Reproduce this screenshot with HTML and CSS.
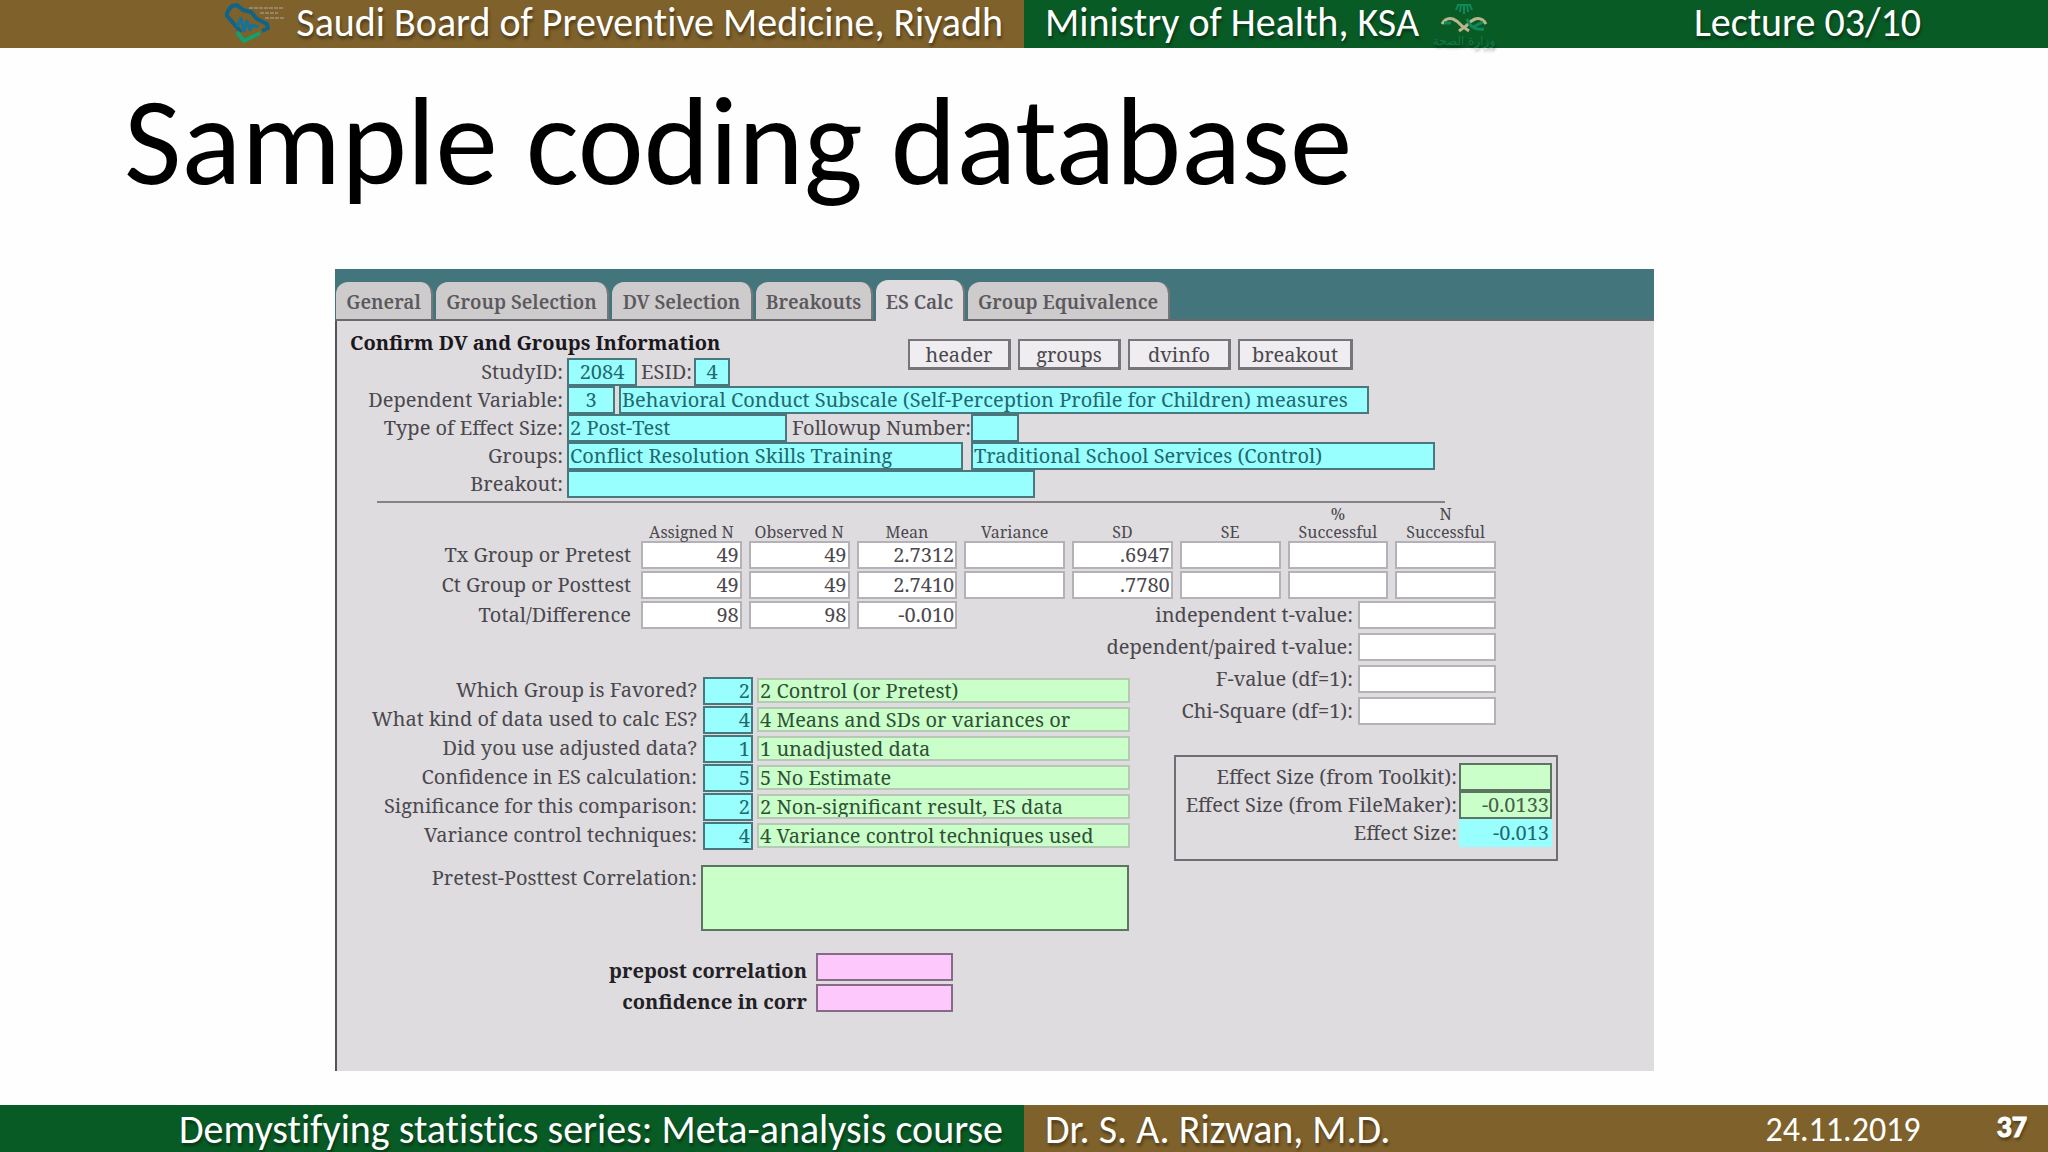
FILE: index.html
```html
<!DOCTYPE html>
<html lang="en">
<head>
<meta charset="utf-8">
<title>Sample coding database</title>
<link rel="stylesheet" href="styles.css">
</head>
<body>
<div class="slide">
  <header class="bar">
    <div class="half brown end">
      <svg class="logo-council" viewBox="0 0 62 40" aria-hidden="true">
        <path d="M17 29 L11 22 L3 13 Q2 9 8 3 L13 2 L19 7 L27 9 L33 16 L43 21 L44 25 L38 28" fill="none" stroke="#0f6488" stroke-width="4" stroke-linejoin="round"/>
        <path d="M13 24 L17 15 L20 28 L23 18 L26 27 L28 22 L34 24" fill="none" stroke="#12739c" stroke-width="3" stroke-linejoin="round"/>
        <path d="M13 29 L20 38 L36 30" fill="none" stroke="#12a06c" stroke-width="4" stroke-linejoin="round"/>
        <path d="M25 5H59M36 10H54M41 15H61" stroke="#98866a" stroke-width="2" stroke-dasharray="4 1"/>
      </svg>
      <span>Saudi Board of Preventive Medicine, Riyadh</span>
    </div>
    <div class="half green">
      <span>Ministry of Health, KSA</span>
      <svg class="logo-moh" viewBox="0 0 62 46" aria-hidden="true">
        <path d="M31 4V14M28 4L27 12M34 4L35 12M25 5L23 10M37 5L39 10M24 5H38" fill="none" stroke="#11875a" stroke-width="2"/>
        <path d="M9 24 Q13 17 20 19 Q25 21 29 26 L36 31" fill="none" stroke="#b9b58c" stroke-width="3"/>
        <path d="M53 24 Q49 17 42 19 Q37 21 33 26 L26 31" fill="none" stroke="#b9b58c" stroke-width="3"/>
        <path d="M11 23H18M34 19 Q38 31 51 29M40 27 L50 22" fill="none" stroke="#11875a" stroke-width="3"/>
        <text x="31" y="45" text-anchor="middle" class="logo-text">وزارة الصحة</text>
      </svg>
      <span class="right">Lecture 03/10</span>
    </div>
  </header>

  <main class="content">
    <h1>Sample coding database</h1>
    <form class="panel">
      <nav class="tabs">
        <button type="button">General</button>
        <button type="button">Group Selection</button>
        <button type="button">DV Selection</button>
        <button type="button">Breakouts</button>
        <button type="button" class="active">ES Calc</button>
        <button type="button">Group Equivalence</button>
      </nav>
      <div class="sheet">
        <section class="info">
          <div class="info-top">
            <h2>Confirm DV and Groups Information</h2>
            <div class="actions">
              <button type="button">header</button>
              <button type="button">groups</button>
              <button type="button">dvinfo</button>
              <button type="button">breakout</button>
            </div>
          </div>
          <div class="row">
            <label class="lead" for="study">StudyID:</label><input id="study" class="cyan w70 mid" value="2084">
            <label class="inner esid" for="esid">ESID:</label><input id="esid" class="cyan w36 mid" value="4">
          </div>
          <div class="row">
            <label class="lead" for="dv">Dependent Variable:</label><input id="dv" class="cyan w48 mid" value="3">
            <input class="cyan w750 gap4" aria-label="Dependent variable description" value="Behavioral Conduct Subscale (Self-Perception Profile for Children) measures">
          </div>
          <div class="row">
            <label class="lead" for="type">Type of Effect Size:</label><input id="type" class="cyan w220" value="2 Post-Test">
            <label class="inner follow" for="follow">Followup Number:</label><input id="follow" class="cyan w48" value="">
          </div>
          <div class="row">
            <label class="lead" for="group">Groups:</label><input id="group" class="cyan w396" value="Conflict Resolution Skills Training">
            <input class="cyan w464 gap8" aria-label="Comparison group" value="Traditional School Services (Control)">
          </div>
          <div class="row">
            <label class="lead" for="breakout">Breakout:</label><input id="breakout" class="cyan w468" value="">
          </div>
        </section>
        <hr>
        <table class="stats">
          <thead>
            <tr><td></td><th>Assigned N</th><th>Observed N</th><th>Mean</th><th>Variance</th><th>SD</th><th>SE</th><th>%<br>Successful</th><th>N<br>Successful</th></tr>
          </thead>
          <tbody>
            <tr><th>Tx Group or Pretest</th><td><input aria-label="Tx assigned N" value="49"></td><td><input aria-label="Tx observed N" value="49"></td><td><input aria-label="Tx mean" value="2.7312"></td><td><input aria-label="Tx variance"></td><td><input aria-label="Tx SD" value=".6947"></td><td><input aria-label="Tx SE"></td><td><input aria-label="Tx percent successful"></td><td><input aria-label="Tx N successful"></td></tr>
            <tr><th>Ct Group or Posttest</th><td><input aria-label="Ct assigned N" value="49"></td><td><input aria-label="Ct observed N" value="49"></td><td><input aria-label="Ct mean" value="2.7410"></td><td><input aria-label="Ct variance"></td><td><input aria-label="Ct SD" value=".7780"></td><td><input aria-label="Ct SE"></td><td><input aria-label="Ct percent successful"></td><td><input aria-label="Ct N successful"></td></tr>
            <tr><th>Total/Difference</th><td><input aria-label="Total assigned N" value="98"></td><td><input aria-label="Total observed N" value="98"></td><td><input aria-label="Mean difference" value="-0.010"></td></tr>
          </tbody>
        </table>
        <div class="lower">
          <section class="questions">
            <div class="q"><label for="q1">Which Group is Favored?</label><input id="q1" class="cyan num" value="2"><input class="lime" aria-label="Group favored" value="2 Control (or Pretest)"></div>
            <div class="q"><label for="q2">What kind of data used to calc ES?</label><input id="q2" class="cyan num" value="4"><input class="lime" aria-label="Kind of data" value="4 Means and SDs or variances or"></div>
            <div class="q"><label for="q3">Did you use adjusted data?</label><input id="q3" class="cyan num" value="1"><input class="lime" aria-label="Adjusted data" value="1 unadjusted data"></div>
            <div class="q"><label for="q4">Confidence in ES calculation:</label><input id="q4" class="cyan num" value="5"><input class="lime" aria-label="Confidence" value="5 No Estimate"></div>
            <div class="q"><label for="q5">Significance for this comparison:</label><input id="q5" class="cyan num" value="2"><input class="lime" aria-label="Significance" value="2 Non-significant result, ES data"></div>
            <div class="q"><label for="q6">Variance control techniques:</label><input id="q6" class="cyan num" value="4"><input class="lime" aria-label="Variance control" value="4 Variance control techniques used"></div>
            <div class="q corr"><label for="ppc">Pretest-Posttest Correlation:</label><textarea id="ppc"></textarea></div>
            <div class="q pink-row first"><label for="pp">prepost correlation</label><input id="pp" class="pink"></div>
            <div class="q pink-row"><label for="cc">confidence in corr</label><input id="cc" class="pink"></div>
          </section>
          <section class="results">
            <div class="t"><label for="t1">independent t-value:</label><input id="t1"></div>
            <div class="t"><label for="t2">dependent/paired t-value:</label><input id="t2"></div>
            <div class="t"><label for="t3">F-value (df=1):</label><input id="t3"></div>
            <div class="t"><label for="t4">Chi-Square (df=1):</label><input id="t4"></div>
            <div class="effect">
              <div class="e"><label for="e1">Effect Size (from Toolkit):</label><input id="e1" class="mint"></div>
              <div class="e"><label for="e2">Effect Size (from FileMaker):</label><input id="e2" class="mint" value="-0.0133"></div>
              <div class="e"><label for="e3">Effect Size:</label><input id="e3" class="plain" value="-0.013"></div>
            </div>
          </section>
        </div>
      </div>
    </form>
  </main>

  <footer class="bar">
    <div class="half green end"><span>Demystifying statistics series: Meta-analysis course</span></div>
    <div class="half brown">
      <span>Dr. S. A. Rizwan, M.D.</span>
      <span class="right date">24.11.2019</span>
      <span class="page">37</span>
    </div>
  </footer>
</div>
</body>
</html>
```
FILE: styles.css
```css
* { box-sizing: border-box; }

body {
  margin: 0;
  background: #fefefe;
  font-family: Carlito, Calibri, Lato, sans-serif;
}

.slide {
  display: flex;
  flex-direction: column;
  min-height: 100vh;
}

/* header and footer bands */
.bar {
  display: grid;
  grid-template-columns: 1fr 1fr;
  height: 47px;
  color: #fff;
  font-size: 40px;
  line-height: 44px;
  font-variant-ligatures: none;
  text-shadow: 1px 3px 3px rgba(0, 0, 0, 0.4);
  white-space: nowrap;
}
.half {
  display: flex;
  align-items: center;
  padding: 0 21px 2px;
}
.end { justify-content: flex-end; }
.brown { background: #7e612b; }
.green { background: #095b25; }
.right { margin-left: auto; margin-right: 106px; }
.date { margin-right: 76px; font-size: 34px; text-shadow: none; }
.page {
  padding-bottom: 5px;
  font-size: 30px;
  font-weight: 700;
  -webkit-text-stroke: 1px #fff;
}
.logo-council { width: 62px; height: 40px; margin-right: 10px; }
.logo-moh { width: 62px; height: 46px; margin-left: 14px; overflow: visible; }
.logo-text { font: 12px "DejaVu Sans", sans-serif; fill: #0f7a48; }

/* slide body */
.content {
  flex: 1;
  display: grid;
  grid-template-columns: 335fr 1319fr 394fr;
  grid-template-rows: 222px auto;
  align-content: start;
}
h1 {
  grid-column: 1 / -1;
  margin: 0;
  padding: 20px 0 0 124px;
  font-size: 125px;
  line-height: 150px;
  font-weight: 400;
  color: #000;
}
.panel {
  grid-column: 2;
  min-height: 802px;
  background: #dedcdf;
  color: #4a484e;
  font-family: "Noto Serif", Caladea, Cambria, "Liberation Serif", serif;
  font-size: 20px;
  line-height: 28px;
}
.panel label { white-space: nowrap; }
.panel input,
.panel textarea,
.panel button {
  margin: 0;
  font: inherit;
  color: inherit;
  border-radius: 0;
}
.panel input {
  height: 28px;
  padding: 0 1px;
  border: 2px solid #b4b2b6;
  background: #fff;
}

/* tab strip */
.tabs {
  display: grid;
  grid-template-columns: 97px 173px 141px 117px 89px 202px;
  column-gap: 3px;
  align-items: end;
  height: 52px;
  padding-left: 1px;
  background: #42767c;
  border-bottom: 2px solid #68696e;
}
.panel .tabs button {
  height: 37px;
  padding: 2px 0 0;
  border: solid #77767a;
  border-width: 0 2px 0 0;
  border-radius: 12px 12px 0 0;
  background: #cdcbcc;
  font-size: 19px;
  font-weight: 600;
  color: #5b595d;
  white-space: nowrap;
}
.panel .tabs .active {
  height: 41px;
  margin-bottom: -2px;
  background: #dedcdf;
}

.sheet {
  min-height: 750px;
  padding-top: 9px;
  border-left: 2px solid #55535a;
}

/* identification fields */
.info-top { display: flex; height: 28px; }
h2 {
  width: 571px;
  margin: 0;
  padding-left: 13px;
  font-size: 20px;
  line-height: 26px;
  color: #1a181c;
}
.actions { display: flex; gap: 7px; padding-top: 9px; }
.panel .actions button {
  width: 103px;
  height: 31px;
  padding: 0;
  border: 2px solid #77757b;
  border-width: 2px 3px 3px 2px;
  background: #efedf0;
}
.panel .actions button:last-child { width: 115px; }
.row { display: flex; height: 28px; }
.lead { width: 230px; padding-right: 4px; text-align: right; }
.panel .cyan {
  border-color: #48777d;
  background: #98fffe;
  color: #22686e;
}
.panel .mid { text-align: center; }
.inner { text-align: right; }
.esid { width: 57px; padding-right: 2px; }
.follow { width: 184px; }
.w36 { width: 36px; }
.w48 { width: 48px; }
.w70 { width: 70px; }
.w220 { width: 220px; }
.w396 { width: 396px; }
.w464 { width: 464px; }
.w468 { width: 468px; }
.w750 { width: 750px; }
.panel .gap4 { margin-left: 4px; }
.panel .gap8 { margin-left: 8px; }

hr {
  width: 1068px;
  height: 2px;
  margin: 3px 0 0 40px;
  border: 0;
  background: #85838a;
}

/* statistics grid */
.stats {
  width: 1166px;
  border-collapse: collapse;
  table-layout: fixed;
}
.stats td, .stats th { padding: 0 7px 2px 0; font-weight: 400; }
.stats td:first-child, .stats tbody th { width: 304px; }
.stats tbody th { padding-right: 10px; text-align: right; }
.stats thead th {
  padding-bottom: 0;
  font-size: 16px;
  line-height: 18px;
  height: 38px;
  vertical-align: bottom;
  text-align: center;
}
.stats input { display: block; width: 100%; text-align: right; }

/* lower half */
.lower { display: flex; }
.questions { width: 794px; padding-top: 46px; }
.q { display: flex; height: 29px; }
.q label { width: 360px; margin-right: 6px; line-height: 26px; text-align: right; }
.panel .num { width: 50px; text-align: right; }
.panel .lime {
  width: 373px;
  height: 25px;
  margin: 1px 0 0 4px;
  border-color: #b5c9b5;
  background: #cbffc9;
  color: #2f5036;
}
.corr { height: 87px; padding-top: 14px; }
.corr label { margin-right: 4px; }
.panel textarea {
  width: 428px;
  height: 66px;
  margin-left: 0;
  border: 2px solid #5d7460;
  background: #cbffc9;
  resize: none;
}
.q.pink-row { height: 31px; }
.q.pink-row.first { height: 46px; padding-top: 15px; }
.q.pink-row label {
  width: 470px;
  margin-right: 9px;
  line-height: 36px;
  font-weight: 700;
  color: #222025;
}
.panel .pink {
  width: 137px;
  border-color: #866b86;
  background: #fdc9fd;
}
.results {
  width: 430px;
  margin-top: -30px;
}
.t {
  display: flex;
  justify-content: flex-end;
  height: 32px;
  margin-right: 65px;
}
.panel .t input { width: 138px; margin-left: 5px; }
.effect {
  width: 384px;
  height: 106px;
  margin: 26px 0 0 43px;
  padding: 6px 4px 0 0;
  border: 2px solid #706e74;
}
.e { display: flex; justify-content: flex-end; height: 28px; }
.panel .e input { width: 93px; margin-left: 2px; text-align: right; }
.panel .mint { border-color: #5d7460; background: #cbffc9; color: #46604a; }
.panel .plain { border-color: #98fffe; background: #98fffe; color: #22686e; }
```
